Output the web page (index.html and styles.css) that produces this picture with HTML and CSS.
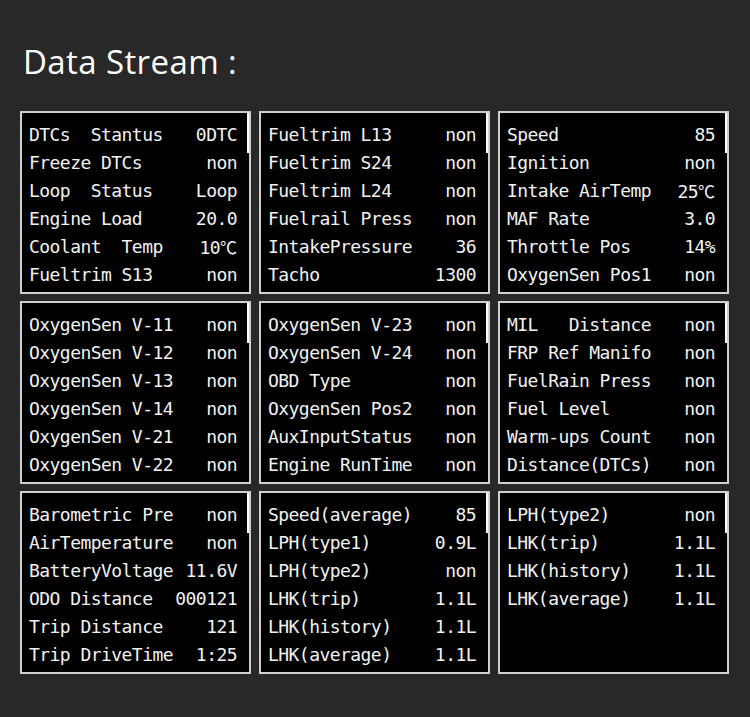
FILE: index.html
```html
<!DOCTYPE html>
<html>
<head>
<meta charset="utf-8">
<title>Data Stream</title>
<link rel="stylesheet" href="styles.css">
</head>
<body>
<div class="page">
  <h1 class="title">Data Stream :</h1>
  <div class="grid">
    <div class="panel">
      <div class="thumb"></div>
      <div class="row"><span class="label">DTCs  Stantus</span><span class="value">0DTC</span></div>
      <div class="row"><span class="label">Freeze DTCs</span><span class="value">non</span></div>
      <div class="row"><span class="label">Loop  Status</span><span class="value">Loop</span></div>
      <div class="row"><span class="label">Engine Load</span><span class="value">20.0</span></div>
      <div class="row"><span class="label">Coolant  Temp</span><span class="value">10<span class="unit">℃</span></span></div>
      <div class="row"><span class="label">Fueltrim S13</span><span class="value">non</span></div>
    </div>
    <div class="panel">
      <div class="thumb"></div>
      <div class="row"><span class="label">Fueltrim L13</span><span class="value">non</span></div>
      <div class="row"><span class="label">Fueltrim S24</span><span class="value">non</span></div>
      <div class="row"><span class="label">Fueltrim L24</span><span class="value">non</span></div>
      <div class="row"><span class="label">Fuelrail Press</span><span class="value">non</span></div>
      <div class="row"><span class="label">IntakePressure</span><span class="value">36</span></div>
      <div class="row"><span class="label">Tacho</span><span class="value">1300</span></div>
    </div>
    <div class="panel">
      <div class="thumb"></div>
      <div class="row"><span class="label">Speed</span><span class="value">85</span></div>
      <div class="row"><span class="label">Ignition</span><span class="value">non</span></div>
      <div class="row"><span class="label">Intake AirTemp</span><span class="value">25<span class="unit">℃</span></span></div>
      <div class="row"><span class="label">MAF Rate</span><span class="value">3.0</span></div>
      <div class="row"><span class="label">Throttle Pos</span><span class="value">14%</span></div>
      <div class="row"><span class="label">OxygenSen Pos1</span><span class="value">non</span></div>
    </div>
    <div class="panel">
      <div class="thumb"></div>
      <div class="row"><span class="label">OxygenSen V-11</span><span class="value">non</span></div>
      <div class="row"><span class="label">OxygenSen V-12</span><span class="value">non</span></div>
      <div class="row"><span class="label">OxygenSen V-13</span><span class="value">non</span></div>
      <div class="row"><span class="label">OxygenSen V-14</span><span class="value">non</span></div>
      <div class="row"><span class="label">OxygenSen V-21</span><span class="value">non</span></div>
      <div class="row"><span class="label">OxygenSen V-22</span><span class="value">non</span></div>
    </div>
    <div class="panel">
      <div class="thumb"></div>
      <div class="row"><span class="label">OxygenSen V-23</span><span class="value">non</span></div>
      <div class="row"><span class="label">OxygenSen V-24</span><span class="value">non</span></div>
      <div class="row"><span class="label">OBD Type</span><span class="value">non</span></div>
      <div class="row"><span class="label">OxygenSen Pos2</span><span class="value">non</span></div>
      <div class="row"><span class="label">AuxInputStatus</span><span class="value">non</span></div>
      <div class="row"><span class="label">Engine RunTime</span><span class="value">non</span></div>
    </div>
    <div class="panel">
      <div class="thumb"></div>
      <div class="row"><span class="label">MIL   Distance</span><span class="value">non</span></div>
      <div class="row"><span class="label">FRP Ref Manifo</span><span class="value">non</span></div>
      <div class="row"><span class="label">FuelRain Press</span><span class="value">non</span></div>
      <div class="row"><span class="label">Fuel Level</span><span class="value">non</span></div>
      <div class="row"><span class="label">Warm-ups Count</span><span class="value">non</span></div>
      <div class="row"><span class="label">Distance(DTCs)</span><span class="value">non</span></div>
    </div>
    <div class="panel">
      <div class="thumb"></div>
      <div class="row"><span class="label">Barometric Pre</span><span class="value">non</span></div>
      <div class="row"><span class="label">AirTemperature</span><span class="value">non</span></div>
      <div class="row"><span class="label">BatteryVoltage</span><span class="value">11.6V</span></div>
      <div class="row"><span class="label">ODO Distance</span><span class="value">000121</span></div>
      <div class="row"><span class="label">Trip Distance</span><span class="value">121</span></div>
      <div class="row"><span class="label">Trip DriveTime</span><span class="value">1:25</span></div>
    </div>
    <div class="panel">
      <div class="thumb"></div>
      <div class="row"><span class="label">Speed(average)</span><span class="value">85</span></div>
      <div class="row"><span class="label">LPH(type1)</span><span class="value">0.9L</span></div>
      <div class="row"><span class="label">LPH(type2)</span><span class="value">non</span></div>
      <div class="row"><span class="label">LHK(trip)</span><span class="value">1.1L</span></div>
      <div class="row"><span class="label">LHK(history)</span><span class="value">1.1L</span></div>
      <div class="row"><span class="label">LHK(average)</span><span class="value">1.1L</span></div>
    </div>
    <div class="panel">
      <div class="thumb"></div>
      <div class="row"><span class="label">LPH(type2)</span><span class="value">non</span></div>
      <div class="row"><span class="label">LHK(trip)</span><span class="value">1.1L</span></div>
      <div class="row"><span class="label">LHK(history)</span><span class="value">1.1L</span></div>
      <div class="row"><span class="label">LHK(average)</span><span class="value">1.1L</span></div>
    </div>
  </div>
</div>
</body>
</html>
```
FILE: styles.css
```css
html, body {
  margin: 0;
  padding: 0;
  background: #282828;
}

.page {
  width: 750px;
  height: 717px;
  box-sizing: border-box;
  padding: 42px 21px 0 20px;
}

.title {
  margin: 0 0 29px 3px;
  height: 40px;
  font-family: "Open Sans", "Noto Sans", sans-serif;
  font-weight: 400;
  font-size: 33px;
  line-height: 40px;
  letter-spacing: 0.4px;
  color: #ffffff;
}

.grid {
  display: grid;
  grid-template-columns: 231px 231px 231px;
  grid-template-rows: 183px 183px 183px;
  column-gap: 8px;
  row-gap: 7px;
}

.panel {
  position: relative;
  box-sizing: border-box;
  background: #000000;
  border: 2px solid #cfcfcf;
  padding: 8px 12px 0 7px;
  font-family: "DejaVu Sans Mono", monospace;
  font-size: 18px;
  letter-spacing: -0.55px;
  color: #f2f2f2;
}

.thumb {
  position: absolute;
  top: 0;
  right: 0;
  width: 2px;
  height: 40px;
  background: #ffffff;
}

.row {
  display: flex;
  justify-content: space-between;
  height: 28px;
  line-height: 28px;
  white-space: pre;
}

.unit {
  font-family: "Noto Sans CJK KR", "Noto Sans CJK SC", sans-serif;
  font-size: 17px;
  letter-spacing: 0;
}
```
